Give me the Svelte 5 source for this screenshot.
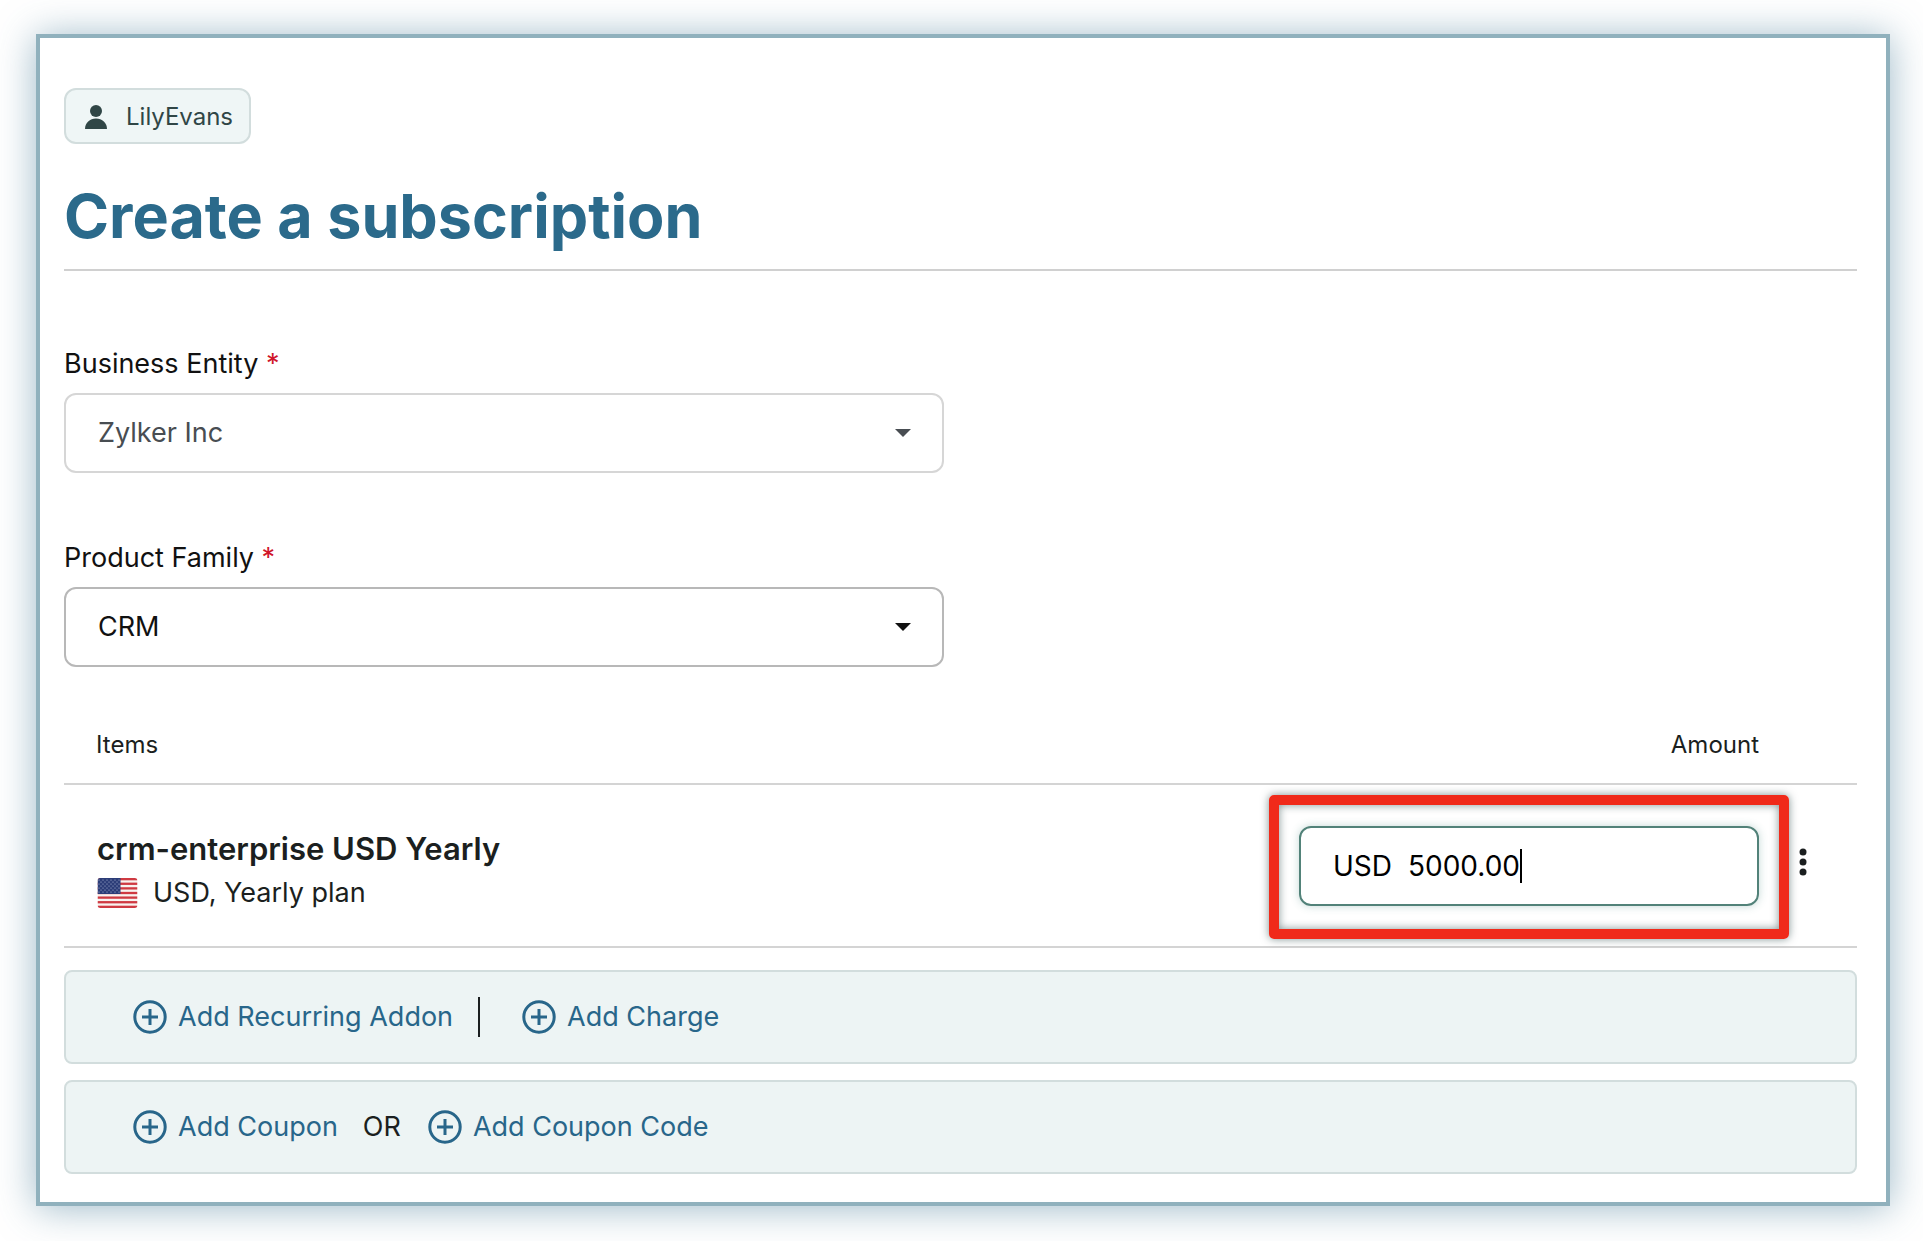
<script>
  let entity = "Zylker Inc";
  let family = "CRM";
  let amount = "5000.00";

  // star positions in the flag canton, rows alternate six and five
  const stars = [];
  for (let row = 0; row < 7; row++) {
    for (let col = 0; col < (row % 2 ? 5 : 6); col++) {
      stars.push({ x: 2 + col * 4 + (row % 2 ? 2 : 0), y: 2 + row * 2 });
    }
  }
</script>

{#snippet plusIcon()}
  <svg class="plus" viewBox="0 0 34 34" aria-hidden="true">
    <circle cx="17" cy="17" r="15.2" />
    <path d="M17 9v16M9 17h16" />
  </svg>
{/snippet}

<main class="card">
  <a class="customer" href="#customer">
    <svg class="person" viewBox="0 0 22 24" aria-hidden="true">
      <circle cx="11" cy="6" r="6" />
      <path d="M0 24c0-6.200 4.800-10.500 11-10.500S22 17.800 22 24z" />
    </svg>
    <span>LilyEvans</span>
  </a>

  <h1>Create a subscription</h1>

  <form on:submit|preventDefault>
    <div class="field">
      <label for="entity">Business Entity <span class="required">*</span></label>
      <div class="select-wrap locked">
        <select id="entity" bind:value={entity} disabled>
          <option>Zylker Inc</option>
        </select>
      </div>
    </div>

    <div class="field">
      <label for="family">Product Family <span class="required">*</span></label>
      <div class="select-wrap">
        <select id="family" bind:value={family}>
          <option>CRM</option>
        </select>
      </div>
    </div>

    <table>
      <thead>
        <tr>
          <th>Items</th>
          <th class="amount-col">Amount</th>
          <th class="menu-col"></th>
        </tr>
      </thead>
      <tbody>
        <tr>
          <td class="item">
            <div class="item-name">crm-enterprise USD Yearly</div>
            <div class="item-plan">
              <svg class="flag" viewBox="0 0 40 30" aria-hidden="true">
                <clipPath id="flag-shape"><rect width="40" height="30" rx="3" /></clipPath>
                <g clip-path="url(#flag-shape)">
                  <rect width="40" height="30" fill="#f8f3f0" />
                  {#each [0, 1, 2, 3, 4, 5, 6] as i}
                    <rect y={i * 4.615} width="40" height="2.308" fill="#cf3a42" />
                  {/each}
                  <rect width="23" height="16" fill="#2c3d78" />
                  {#each stars as s}
                    <circle cx={s.x - 0.5} cy={s.y} r="0.6" fill="#b5bed8" />
                  {/each}
                </g>
              </svg>
              USD, Yearly plan
            </div>
          </td>
          <td>
            <div class="amount">
              <label for="amount">USD</label>
              <input id="amount" type="text" bind:value={amount} />
              <span class="caret"></span>
            </div>
          </td>
          <td class="menu-col">
            <button type="button" class="menu" aria-label="More actions">
              <svg viewBox="0 0 8 28" aria-hidden="true">
                <circle cx="4" cy="4" r="3.500" />
                <circle cx="4" cy="14" r="3.500" />
                <circle cx="4" cy="24" r="3.500" />
              </svg>
            </button>
          </td>
        </tr>
      </tbody>
    </table>

    <div class="panel">
      <button type="button" class="add">{@render plusIcon()}Add Recurring Addon</button>
      <span class="separator"></span>
      <button type="button" class="add">{@render plusIcon()}Add Charge</button>
    </div>

    <div class="panel">
      <button type="button" class="add">{@render plusIcon()}Add Coupon</button>
      <span class="or">OR</span>
      <button type="button" class="add">{@render plusIcon()}Add Coupon Code</button>
    </div>
  </form>
</main>

<style>
:global(body) {
  margin: 0;
  background: #fff;
}

.card {
  display: flow-root;
  margin: 34px 33px 35px 36px;
  padding: 50px 29px 28px 24px;
  border: 4px solid #90b1bd;
  background: #fff;
  box-shadow: 0 2px 36px rgba(60, 115, 145, .5);
  font-family: Inter, "Liberation Sans", sans-serif;
  font-size: 27px;
  line-height: 34px;
  color: #1b1f20;
}

.card * {
  box-sizing: border-box;
}

.customer {
  display: inline-flex;
  align-items: center;
  gap: 19px;
  height: 56px;
  padding: 2px 16px 0 19px;
  border: 2px solid #d2dddd;
  border-radius: 12px;
  background: #eff6f6;
  color: #304646;
  font-size: 24px;
  line-height: 30px;
  text-decoration: none;
  vertical-align: top;
}

.person {
  width: 22px;
  height: 24px;
  fill: #304646;
}

h1 {
  margin: 34px 0 76px;
  padding-bottom: 15px;
  border-bottom: 2px solid #d0d0d0;
  color: #2b6a8b;
  font-size: 61px;
  line-height: 76px;
  font-weight: 700;
}

.field {
  width: 880px;
  max-width: 100%;
  margin-bottom: 68px;
}

.field + .field {
  margin-bottom: 63px;
}

.field label {
  display: block;
  margin-bottom: 12px;
  color: #111;
}

.required {
  color: #d0152a;
}

.select-wrap {
  position: relative;
  color: #111;
}

.select-wrap::after {
  content: "";
  position: absolute;
  right: 33px;
  top: 36px;
  border: 8px solid transparent;
  border-top-color: currentColor;
  border-bottom: 0;
  pointer-events: none;
}

.locked {
  color: #484d52;
}

select {
  display: block;
  width: 100%;
  height: 80px;
  padding: 0 60px 0 32px;
  border: 2px solid #b8b8b8;
  border-radius: 12px;
  background: #fff;
  color: inherit;
  font: inherit;
  appearance: none;
  opacity: 1;
}

.locked select {
  border-color: #d6d6d6;
}

table {
  width: 100%;
  margin-bottom: 22px;
  border-collapse: separate;
  border-spacing: 0;
}

th {
  padding: 0 0 23px 32px;
  font-size: 24px;
  line-height: 30px;
  font-weight: 400;
  text-align: left;
}

th, td {
  border-bottom: 2px solid #d4d4d4;
}

td {
  height: 163px;
  padding: 0;
}

.amount-col {
  width: 460px;
  padding-left: 0;
  text-align: right;
}

.menu-col {
  width: 98px;
  padding-left: 0;
}

.item {
  padding: 8px 0 0 33px;
}

.item-name {
  margin-bottom: 8px;
  font-size: 31px;
  line-height: 38px;
  font-weight: 600;
}

.item-plan {
  display: flex;
  align-items: center;
  gap: 15px;
}

.flag {
  width: 41px;
  height: 30px;
}

.amount {
  position: relative;
  display: flex;
  align-items: center;
  height: 80px;
  padding-left: 32px;
  border: 2px solid #528279;
  border-radius: 12px;
  box-shadow: 0 0 8px rgba(60, 130, 120, .3);
  color: #000;
  font-size: 28px;
}

/* highlight frame round the amount */
.amount::after {
  content: "";
  position: absolute;
  inset: -33px -32px -35px;
  border: 10px solid #f02a1a;
  border-radius: 5px;
  box-shadow: 0 0 8px rgba(0, 40, 40, .5), inset 0 0 8px rgba(0, 40, 40, .5);
  pointer-events: none;
}

.amount label {
  margin-right: 16px;
}

.amount input {
  field-sizing: content;
  padding: 0;
  border: 0;
  outline: none;
  background: none;
  color: inherit;
  font: inherit;
  caret-color: transparent;
}

.caret {
  width: 2px;
  height: 34px;
  background: #000;
}

.menu {
  display: block;
  width: 16px;
  margin: 0 0 8px 36px;
  padding: 0 4px;
  border: 0;
  background: none;
  cursor: pointer;
}

.menu svg {
  display: block;
  width: 8px;
  height: 28px;
  fill: #1b1f20;
}

.panel {
  display: flex;
  align-items: center;
  height: 94px;
  padding-left: 67px;
  border: 2px solid #d2dddd;
  border-radius: 8px;
  background: #edf4f4;
}

.panel + .panel {
  margin-top: 16px;
}

.add {
  display: flex;
  align-items: center;
  gap: 11px;
  padding: 0;
  border: 0;
  background: none;
  color: #28668a;
  font: inherit;
  cursor: pointer;
}

.plus {
  width: 34px;
  height: 34px;
  fill: none;
  stroke: #28668a;
  stroke-width: 3;
}

.separator {
  width: 2px;
  height: 40px;
  margin: 0 42px 0 25px;
  background: #1b1f20;
}

.or {
  margin: 0 27px 0 25px;
}
</style>
